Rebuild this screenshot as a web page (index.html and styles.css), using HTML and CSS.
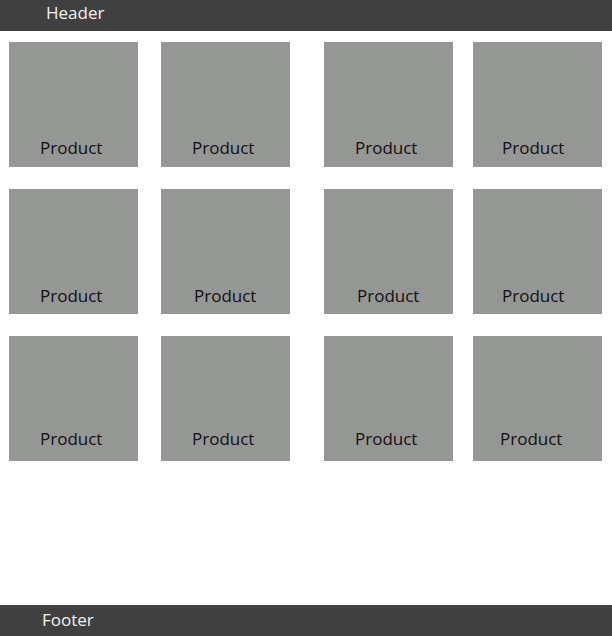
FILE: index.html
```html
<!DOCTYPE html>
<html lang="en">
<head>
<meta charset="utf-8">
<title>Products</title>
<link rel="stylesheet" href="styles.css">
</head>
<body>
<div class="page">
  <header class="header">Header</header>
  <main class="grid">
    <div class="card r1 c1"><span class="label">Product</span></div>
    <div class="card r1 c2"><span class="label">Product</span></div>
    <div class="card r1 c3"><span class="label">Product</span></div>
    <div class="card r1 c4"><span class="label">Product</span></div>
    <div class="card r2 c1"><span class="label">Product</span></div>
    <div class="card r2 c2 shift"><span class="label">Product</span></div>
    <div class="card r2 c3 shift"><span class="label">Product</span></div>
    <div class="card r2 c4"><span class="label">Product</span></div>
    <div class="card r3 c1"><span class="label">Product</span></div>
    <div class="card r3 c2"><span class="label">Product</span></div>
    <div class="card r3 c3"><span class="label">Product</span></div>
    <div class="card r3 c4 back"><span class="label">Product</span></div>
  </main>
  <footer class="footer">Footer</footer>
</div>
</body>
</html>
```

FILE: styles.css
```css
html, body {
  margin: 0;
  padding: 0;
  background: #ffffff;
}

body {
  font-family: "Open Sans", "DejaVu Sans", sans-serif;
  font-size: 17px;
}

.page {
  display: flex;
  flex-direction: column;
  min-height: 100vh;
}

.header {
  background: #404040;
  color: #f2f2f2;
  height: 31px;
  box-sizing: border-box;
  padding: 1px 0 0 46px;
  line-height: 23px;
}

.grid {
  flex: 1;
  display: grid;
  grid-template-columns: 152px 163px 149px 129px;
  grid-auto-rows: 125px;
  row-gap: 22px;
  padding: 11px 0 0 9px;
  align-content: start;
}

.card {
  width: 129px;
  height: 125px;
  background: #959795;
  box-sizing: border-box;
  color: #111111;
  line-height: 23px;
}

.label {
  display: block;
}

.r1 { padding-top: 94px; }
.r2 { padding-top: 95px; }
.r3 { padding-top: 91px; }

.c1, .c2, .c3 { padding-left: 31px; }
.c4 { padding-left: 29px; }
.shift { padding-left: 33px; }
.back { padding-left: 27px; }

.footer {
  background: #404040;
  color: #f2f2f2;
  height: 31px;
  box-sizing: border-box;
  padding: 3px 0 0 42px;
  line-height: 23px;
}
```
